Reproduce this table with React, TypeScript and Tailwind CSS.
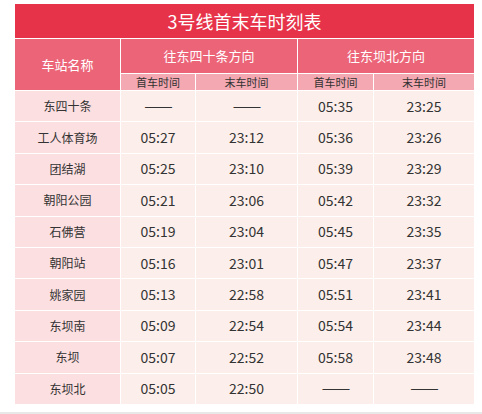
import React from "react";

const rows: [string, string, string, string, string][] = [
  ["东四十条", "——", "——", "05:35", "23:25"],
  ["工人体育场", "05:27", "23:12", "05:36", "23:26"],
  ["团结湖", "05:25", "23:10", "05:39", "23:29"],
  ["朝阳公园", "05:21", "23:06", "05:42", "23:32"],
  ["石佛营", "05:19", "23:04", "05:45", "23:35"],
  ["朝阳站", "05:16", "23:01", "05:47", "23:37"],
  ["姚家园", "05:13", "22:58", "05:51", "23:41"],
  ["东坝南", "05:09", "22:54", "05:54", "23:44"],
  ["东坝", "05:07", "22:52", "05:58", "23:48"],
  ["东坝北", "05:05", "22:50", "——", "——"],
];

export default function App() {
  return (
    <div
      className="w-[482px] h-[414px] bg-white overflow-hidden"
      style={{ fontFamily: '"Noto Sans CJK SC", "Noto Sans", sans-serif' }}
    >
      <div className="pt-[4px] pl-[15px]">
        <div className="grid w-[459px] grid-cols-[105px_74px_101px_75px_100px] gap-px bg-white">
          <div className="col-span-5 h-[34px] bg-[#e7334a] flex items-center justify-center text-white text-[18px]">
            3号线首末车时刻表
          </div>
          <div className="row-span-2 bg-[#ec6478] flex items-center justify-center text-white text-[13px]">
            车站名称
          </div>
          <div className="col-span-2 h-[34px] bg-[#ec6478] flex items-center justify-center text-white text-[13px]">
            往东四十条方向
          </div>
          <div className="col-span-2 h-[34px] bg-[#ec6478] flex items-center justify-center text-white text-[13px]">
            往东坝北方向
          </div>
          {["首车时间", "末车时间", "首车时间", "末车时间"].map((t, i) => (
            <div
              key={i}
              className="h-[16px] bg-[#f4a8b1] flex items-center justify-center text-[#333] text-[11px] leading-none"
            >
              {t}
            </div>
          ))}
          {rows.map((r, ri) => (
            <React.Fragment key={ri}>
              <div className="h-[30.4px] bg-[#fcdfe1] flex items-center justify-center text-[#333] text-[12px]">
                {r[0]}
              </div>
              {r.slice(1).map((v, ci) => (
                <div
                  key={ci}
                  className="h-[30.4px] bg-[#fcefeb] flex items-center justify-center text-[#333] text-[14px]"
                >
                  {v === "——" ? (
                    <span className="font-['Liberation_Sans',sans-serif] text-[14px] tracking-[-1px]">
                      {v}
                    </span>
                  ) : (
                    v
                  )}
                </div>
              ))}
            </React.Fragment>
          ))}
        </div>
      </div>
      <div className="mt-[8px] h-[3px] bg-[#e8e8e8]" />
    </div>
  );
}
